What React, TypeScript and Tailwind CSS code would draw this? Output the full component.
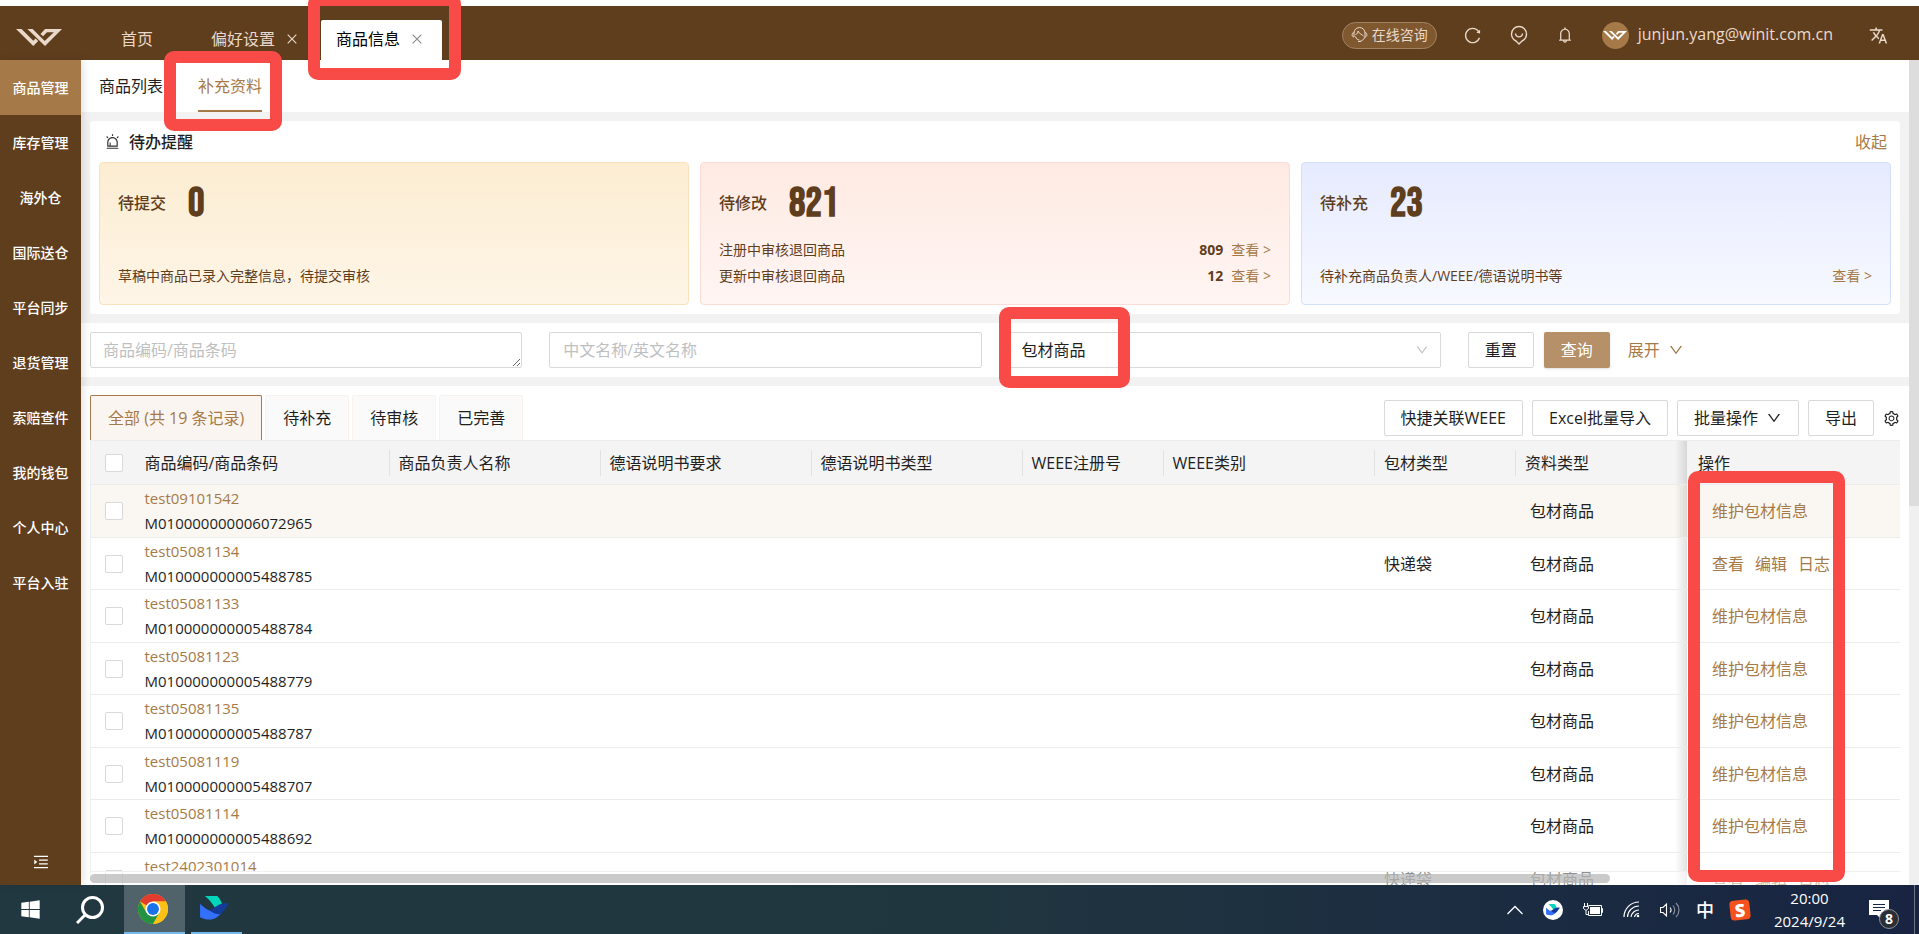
import { useState } from 'react'
import {
  AiOutlineAlert,
  AiOutlineBell,
  AiOutlineClose,
  AiOutlineDown,
  AiOutlineMenuUnfold,
  AiOutlineReload,
  AiOutlineSetting,
} from 'react-icons/ai'
import { FaWindows } from 'react-icons/fa'
import { MdTranslate } from 'react-icons/md'

const menuItems = [
  '商品管理',
  '库存管理',
  '海外仓',
  '国际送仓',
  '平台同步',
  '退货管理',
  '索赔查件',
  '我的钱包',
  '个人中心',
  '平台入驻',
]

interface Product {
  sku: string
  barcode: string
  packType: string
  dataType: string
  actions: string[]
}

const products: Product[] = [
  { sku: 'test09101542', barcode: 'M010000000006072965', packType: '', dataType: '包材商品', actions: ['维护包材信息'] },
  { sku: 'test05081134', barcode: 'M010000000005488785', packType: '快递袋', dataType: '包材商品', actions: ['查看', '编辑', '日志'] },
  { sku: 'test05081133', barcode: 'M010000000005488784', packType: '', dataType: '包材商品', actions: ['维护包材信息'] },
  { sku: 'test05081123', barcode: 'M010000000005488779', packType: '', dataType: '包材商品', actions: ['维护包材信息'] },
  { sku: 'test05081135', barcode: 'M010000000005488787', packType: '', dataType: '包材商品', actions: ['维护包材信息'] },
  { sku: 'test05081119', barcode: 'M010000000005488707', packType: '', dataType: '包材商品', actions: ['维护包材信息'] },
  { sku: 'test05081114', barcode: 'M010000000005488692', packType: '', dataType: '包材商品', actions: ['维护包材信息'] },
  { sku: 'test2402301014', barcode: '', packType: '快递袋', dataType: '包材商品', actions: ['查看', '编辑', '日志'] },
]

const columns = ['商品负责人名称', '德语说明书要求', '德语说明书类型', 'WEEE注册号', 'WEEE类别', '包材类型', '资料类型']

const LogoMark = ({ className }: { className: string }) => (
  <svg viewBox="48 57 141 52" className={className} fill="currentColor" aria-hidden="true">
    <path d="M48 57H65L101 93L108 86L116 94L101 109Z" />
    <path d="M83 57H99L136 94L164 67H143L131 79L123 72L137 57H189L137 109Z" />
  </svg>
)

const WaveIcon = ({ className }: { className: string }) => (
  <svg viewBox="0 0 30 26" className={className} aria-hidden="true">
    <path d="M5 0H18C21 3 22 6 23 9L16 13C13 8 9 3 5 0Z" fill="#00d6b9" />
    <path d="M0 8C6 14 14 19 23 16C18 24 10 27 0 22Z" fill="#3370ff" />
    <path d="M12 14C17 11 21 6 30 8C26 12 25 17 20 19C16 19 12 17 9 14Z" fill="#133c9a" />
  </svg>
)

const ChromeIcon = () => (
  <svg viewBox="0 0 48 48" className="size-[30px]" aria-hidden="true">
    <circle cx="24" cy="24" r="24" fill="#fbc116" />
    <path d="M24 24L3.2 12A24 24 0 0 1 44.8 12H24Z" fill="#e33b2e" />
    <path d="M3.2 12L13.6 30L24 24L34.4 30L24 48A24 24 0 0 1 3.2 12Z" fill="#229342" />
    <path d="M24 12H44.8A24 24 0 0 1 24 48L34.4 30Z" fill="#fbc116" />
    <circle cx="24" cy="24" r="12" fill="#fff" />
    <circle cx="24" cy="24" r="9.5" fill="#1a73e8" />
  </svg>
)

const Header = () => (
  <header className="flex h-[54px] shrink-0 bg-[#5f3e1d] text-[#ead9ca]">
    <div className="flex w-[81px] items-center pt-2 pl-4">
      <LogoMark className="h-[17px] w-[46px]" />
    </div>
    <nav className="flex items-end pl-10">
      <a href="#home" className="flex h-10 items-center pb-[2px]">首页</a>
      <div className="flex h-10 items-center gap-[10px] pr-[22px] pb-[2px] pl-[58px]">
        <a href="#preference">偏好设置</a>
        <button aria-label="关闭偏好设置"><AiOutlineClose className="size-[14px]" /></button>
      </div>
      <div className="flex h-10 items-center gap-[10px] rounded-t-[2px] bg-white pr-[18px] pb-[2px] pl-[15px] text-black">
        <a href="#product">商品信息</a>
        <button aria-label="关闭商品信息" className="text-[#8c8c8c]"><AiOutlineClose className="size-[14px]" /></button>
      </div>
    </nav>
    <div className="ml-auto flex items-center pt-1 pr-[31px]">
      <button className="flex h-[27px] items-center gap-1 rounded-full border border-[#a08362] bg-[#80582f] px-2 pb-px text-sm">
        <svg viewBox="0 0 17 17" className="size-[17px]" fill="none" stroke="currentColor" aria-hidden="true">
          <path d="M3 11V7A5.500 5.500 0 0 1 14 7V10C14 12.500 11.500 15 8.500 15.500" />
          <path d="M3 6.500C0.500 6.500 0.500 11 3 11M14 6.500C16.500 6.500 16.500 11 14 11" />
          <path d="M4.500 8.500C6.500 8 7 6.500 7 5C8.500 8 11 8.500 12.500 10M4.500 10.500C5 13 7 14 8.500 14" />
          <path d="M7 15.500H10" />
        </svg>
        在线咨询
      </button>
      <button aria-label="刷新" className="ml-[26px]"><AiOutlineReload className="size-[19px]" /></button>
      <button aria-label="位置" className="ml-7">
        <svg viewBox="0 0 18 20" className="h-5 w-[18px]" fill="none" stroke="currentColor" strokeWidth="1.400" aria-hidden="true">
          <path d="M9 19L6 16C3 14.500 1.500 12 1.500 9A7.500 7.500 0 0 1 16.500 9C16.500 12 15 14.500 12 16Z" />
          <path d="M5.500 8.500C6 13 12 13 12.500 8.500" />
        </svg>
      </button>
      <button aria-label="消息" className="ml-7"><AiOutlineBell className="size-[18px]" /></button>
      <span className="ml-7 flex size-[27px] items-center justify-center rounded-full bg-[#a67a48] text-white">
        <LogoMark className="h-[9px] w-6" />
      </span>
      <a href="#account" className="ml-[9px] pb-[2px]">junjun.yang@winit.com.cn</a>
      <button aria-label="切换语言" className="ml-9"><MdTranslate className="size-[19px]" /></button>
    </div>
  </header>
)

const Sidebar = () => (
  <aside className="z-10 flex w-[81px] shrink-0 flex-col bg-[#5f3e1d] text-sm font-medium text-white shadow-[2px_0_8px_rgba(0,0,0,0.12)]">
    {menuItems.map((item, i) => (
      <a
        key={item}
        href="#menu"
        className={`flex h-[55px] shrink-0 items-center justify-center ${i === 0 ? 'bg-[#a67a48]' : ''}`}
      >
        {item}
      </a>
    ))}
    <button aria-label="展开菜单" className="mx-auto mt-auto mb-[14px]">
      <AiOutlineMenuUnfold className="size-[18px]" />
    </button>
  </aside>
)

const ViewLink = () => (
  <a href="#view" className="text-[#a67a48]">查看 &gt;</a>
)

interface TodoCardProps {
  title: string
  count: number
  tone: string
  children: React.ReactNode
}

const TodoCard = ({ title, count, tone, children }: TodoCardProps) => (
  <div className={`flex h-[143px] flex-col justify-between rounded border bg-linear-to-b px-[18px] pt-[18px] pb-[15px] text-[#5f3e1d] ${tone}`}>
    <div className="flex h-10 items-center gap-[22px]">
      <h3 className="pt-1 font-medium">{title}</h3>
      <strong className="pt-[5px] font-['Bebas_Neue','Roboto_Condensed',sans-serif] text-[41px] leading-10">{count}</strong>
    </div>
    <div className="text-sm leading-[26px]">{children}</div>
  </div>
)

const TodoPanel = () => (
  <section className="mx-[9px] rounded bg-white px-[9px] pt-[6px] pb-[9px]">
    <div className="flex h-[35px] items-center pr-[4px] pb-[6px] pl-[5px]">
      <AiOutlineAlert className="size-[17px] text-[#333]" />
      <h2 className="ml-2 font-medium">待办提醒</h2>
      <button className="ml-auto text-[#a67a48]">收起</button>
    </div>
    <div className="grid grid-cols-3 gap-[11px]">
      <TodoCard title="待提交" count={0} tone="from-[#fcedd2] to-[#fef5e7] border-[#f9e2bb]">
        <p>草稿中商品已录入完整信息，待提交审核</p>
      </TodoCard>
      <TodoCard title="待修改" count={821} tone="from-[#feeae2] to-[#fff5f3] border-[#fbdcd6]">
        <p className="flex justify-between">
          注册中审核退回商品
          <span><b className="mr-2">809</b><ViewLink /></span>
        </p>
        <p className="flex justify-between">
          更新中审核退回商品
          <span><b className="mr-2">12</b><ViewLink /></span>
        </p>
      </TodoCard>
      <TodoCard title="待补充" count={23} tone="from-[#e6eafe] to-[#f7f9ff] border-[#d3dffc]">
        <p className="flex justify-between">
          待补充商品负责人/WEEE/德语说明书等
          <ViewLink />
        </p>
      </TodoCard>
    </div>
  </section>
)

const FilterBar = () => (
  <form className="grid h-[54px] shrink-0 grid-cols-4 items-center gap-[27px] bg-white px-[9px]">
    <textarea
      aria-label="商品编码/商品条码"
      placeholder="商品编码/商品条码"
      rows={1}
      className="h-9 rounded-[2px] border border-[#d9d9d9] px-3 py-[5px] leading-6 placeholder:text-[#bfbfbf]"
    />
    <input
      aria-label="中文名称/英文名称"
      placeholder="中文名称/英文名称"
      className="h-9 rounded-[2px] border border-[#d9d9d9] px-[13px] placeholder:text-[#bfbfbf]"
    />
    <div className="relative">
      <select aria-label="资料类型" className="block h-9 w-full appearance-none rounded-[2px] border border-[#d9d9d9] bg-white px-3">
        <option>包材商品</option>
      </select>
      <AiOutlineDown className="pointer-events-none absolute top-[11px] right-3 size-[14px] text-[#bfbfbf]" />
    </div>
    <div className="flex items-center">
      <button type="reset" className="h-9 rounded-[2px] border border-[#d9d9d9] px-4">重置</button>
      <button type="button" className="ml-[10px] h-9 rounded-[2px] bg-[#b59069] px-[17px] text-white shadow-sm">查询</button>
      <button type="button" className="ml-[18px] flex items-center gap-2 text-[#a67a48]">
        展开
        <AiOutlineDown className="size-4" />
      </button>
    </div>
  </form>
)

const Toolbar = () => {
  const tabs = ['全部 (共 19 条记录)', '待补充', '待审核', '已完善']
  const [active, setActive] = useState(0)
  const button = 'h-9 rounded-[2px] border border-[#d9d9d9] px-4'

  return (
    <div className="flex items-start">
      <div className="flex gap-[3px]">
        {tabs.map((tab, i) => (
          <button
            key={tab}
            onClick={() => setActive(i)}
            className={`h-[45px] rounded-t-[2px] border border-b-0 px-[17px] ${
              i === active ? 'border-[#a67a48] bg-[#faf5f1] text-[#a67a48]' : 'border-[#f7f2ee] bg-[#fafafa]'
            }`}
          >
            {tab}
          </button>
        ))}
      </div>
      <div className="ml-auto flex items-center gap-[9px] pt-[5px]">
        <button className={button}>快捷关联WEEE</button>
        <button className={button}>Excel批量导入</button>
        <button className={`flex items-center gap-2 ${button}`}>
          批量操作
          <AiOutlineDown className="size-4" />
        </button>
        <button className={button}>导出</button>
        <button aria-label="列设置"><AiOutlineSetting className="size-[17px]" /></button>
      </div>
    </div>
  )
}

const CheckBox = ({ label }: { label: string }) => (
  <input
    type="checkbox"
    aria-label={label}
    className="block size-[18px] appearance-none rounded-[2px] border border-[#d9d9d9] bg-white checked:bg-[#a67a48]"
  />
)

const pinned = 'relative before:absolute before:inset-y-0 before:-left-3 before:w-3 before:bg-linear-to-l before:from-black/12 before:to-transparent'

const ProductTable = () => (
  <table className="w-full table-fixed border-l border-[#f0f0f0] text-left">
    <colgroup>
      <col className="w-[46px]" />
      <col className="w-[252px]" />
      <col className="w-[211px]" />
      <col className="w-[211px]" />
      <col className="w-[211px]" />
      <col className="w-[141px]" />
      <col />
      <col className="w-[141px]" />
      <col className="w-[172px]" />
      <col className="w-[213px]" />
    </colgroup>
    <thead>
      <tr className="h-11 border-y border-[#ececec] bg-[#f4f4f4]">
        <th className="pl-[14px]"><CheckBox label="全选" /></th>
        <th className="pl-2 font-normal">商品编码/商品条码</th>
        {columns.map((name) => (
          <th key={name} className="font-normal">
            <div className="border-l border-[#e2e2e2] pl-[9px] leading-[26px]">{name}</div>
          </th>
        ))}
        <th className={`pl-[11px] font-normal ${pinned}`}>操作</th>
      </tr>
    </thead>
    <tbody>
      {products.map((p, i) => (
        <tr key={p.sku} className={`h-[53px] border-b border-[#ececec] even:h-[52px] ${i === 0 ? 'bg-[#faf7f2]' : 'bg-white'}`}>
          <td className="pl-[14px]"><CheckBox label={p.sku} /></td>
          <td className="pl-2 text-[15px] leading-[25px]">
            <a href="#sku" className="block text-[#a67a48]">{p.sku}</a>
            <div className="h-[25px]">{p.barcode}</div>
          </td>
          <td />
          <td />
          <td />
          <td />
          <td />
          <td className="pl-[10px]">{p.packType}</td>
          <td className="pl-[15px]">{p.dataType}</td>
          <td className={`pl-[25px] text-[#a67a48] ${pinned}`}>
            <div className="flex gap-[11px]">
              {p.actions.map((action) => (
                <a key={action} href="#action">{action}</a>
              ))}
            </div>
          </td>
        </tr>
      ))}
    </tbody>
  </table>
)

const Taskbar = () => (
  <footer className="flex h-[49px] shrink-0 items-stretch bg-linear-to-r from-[#223840] via-[#20363f] to-[#182442] text-white">
    <button aria-label="开始" className="flex w-[60px] items-center justify-center"><FaWindows className="size-[21px]" /></button>
    <button aria-label="搜索" className="flex w-16 items-center justify-center pr-1">
      <svg viewBox="0 0 28 28" className="size-7" fill="none" stroke="currentColor" strokeWidth="3" aria-hidden="true">
        <circle cx="16.500" cy="11.500" r="10" />
        <path d="M9.500 18.500L1 27" />
      </svg>
    </button>
    <button aria-label="Chrome" className="flex w-[61px] items-center justify-center border-b-2 border-[#76b9ed] bg-[#50626a] pr-1"><ChromeIcon /></button>
    <button aria-label="飞书" className="ml-[6px] flex w-[51px] items-center justify-center border-b-2 border-[#76b9ed] pr-1">
      <WaveIcon className="h-[25px] w-[29px]" />
    </button>
    <div className="ml-auto flex items-center gap-5">
      <svg viewBox="0 0 16 10" className="h-[10px] w-4" fill="none" stroke="currentColor" strokeWidth="1.300" aria-hidden="true">
        <path d="M0.500 9L8 1.500L15.500 9" />
      </svg>
      <span className="flex size-5 items-center justify-center rounded-full bg-white">
        <WaveIcon className="h-3 w-[14px]" />
      </span>
      <svg viewBox="0 0 20 14" className="h-[14px] w-5" fill="none" stroke="currentColor" aria-hidden="true">
        <path d="M5.500 2.500H18.500V12.500H5.500V8M18.500 5.500H19.500V9.500H18.500M1.500 0V3M4.500 0V3M0.500 3.500H5.500V5.500L3 7.500L0.500 5.500ZM3 7.500V11.500H5.500" />
        <path d="M7 4H17V11H7Z" fill="currentColor" stroke="none" />
      </svg>
      <svg viewBox="0 0 17 17" className="size-[17px]" fill="none" stroke="currentColor" strokeWidth="1.200" aria-hidden="true">
        <path d="M1 16A15 15 0 0 1 16 1" />
        <path d="M4.500 16A11.500 11.500 0 0 1 16 5" />
        <path d="M8 16A8 8 0 0 1 16 9" />
        <path d="M11.500 16A4.500 4.500 0 0 1 16 12.500" />
        <circle cx="15" cy="15" r="1.300" fill="currentColor" stroke="none" />
      </svg>
      <svg viewBox="0 0 20 16" className="h-4 w-5" fill="none" stroke="currentColor" strokeWidth="1.100" aria-hidden="true">
        <path d="M0.500 5.500H3L6.500 2V14L3 10.500H0.500ZM10 5.500C11.300 7 11.300 9 10 10.500" />
        <path d="M13 3.500C15.300 6 15.300 10 13 12.500M16 1C20 5 20 11 16 15" opacity="0.500" />
      </svg>
      <span className="-ml-1 text-lg leading-5 font-medium">中</span>
      <span className="-ml-1 flex size-5 -rotate-6 items-center justify-center rounded bg-[#f4511e] text-lg leading-5 font-extrabold">S</span>
      <div className="ml-1 text-center text-[15px] leading-[23px]">
        <p>20:00</p>
        <p>2024/9/24</p>
      </div>
      <div className="relative mr-[25px] ml-1">
        <svg viewBox="0 0 20 19" className="h-[19px] w-5" aria-hidden="true">
          <path d="M0 0H20V15H12V19L8 15H0Z" fill="#fff" />
          <path d="M4 4.500H16M4 7.500H16M4 10.500H12" stroke="#1a2744" />
        </svg>
        <span className="absolute top-[9px] left-[10px] flex size-5 items-center justify-center rounded-full border border-[#8b8f96] bg-[#2b2e35] text-sm leading-5 font-bold">8</span>
      </div>
    </div>
    <div className="w-[5px] border-l border-[#6c7484]" />
  </footer>
)

// Hand-drawn marks that guide the reader through the steps
const Highlights = () => (
  <div className="pointer-events-none">
    <div className="absolute top-[-6px] left-[308px] z-20 h-[86px] w-[153px] rounded-[10px] border-12 border-[#f84b47]" />
    <div className="absolute top-[51px] left-[164px] z-20 h-[80px] w-[118px] rounded-[10px] border-12 border-[#f84b47]" />
    <div className="absolute top-[307px] left-[999px] z-20 h-[81px] w-[131px] rounded-[10px] border-12 border-[#f84b47]" />
    <div className="absolute top-[471px] left-[1688px] z-20 h-[411px] w-[157px] rounded-[10px] border-12 border-[#f84b47]" />
  </div>
)

export default function App() {
  return (
    <div className="relative flex h-screen flex-col overflow-hidden bg-white pt-[6px] font-['Open_Sans','Noto_Sans_CJK_SC',sans-serif] text-base text-[#1f1f1f]">
      <Header />
      <div className="flex min-h-0 flex-1">
        <Sidebar />
        <main className="flex min-w-0 flex-1 flex-col bg-[#f2f2f2]">
          <nav className="flex h-[52px] shrink-0 gap-[35px] bg-white pl-[18px]">
            <a href="#list" className="flex items-center">商品列表</a>
            <a href="#supplement" className="flex items-center border-b-2 border-[#a67a48] pt-[2px] text-[#a67a48]">补充资料</a>
          </nav>
          <div className="flex min-h-0 flex-1 flex-col gap-[9px] pt-[9px]">
            <TodoPanel />
            <FilterBar />
            <section className="relative min-h-0 flex-1 overflow-hidden bg-white px-[9px] pt-[9px]">
              <Toolbar />
              <ProductTable />
              <div className="absolute inset-x-[9px] bottom-0 h-[14px] border-t border-[#f0f0f0] bg-white/50">
                <div className="mt-[2px] h-[9px] w-[84%] rounded-full bg-[#b4b4b4]/70" />
              </div>
            </section>
          </div>
        </main>
        <div className="w-[10px] shrink-0 bg-[#f0f0f0]">
          <div className="h-[54%] bg-[#dddddd]" />
        </div>
      </div>
      <Taskbar />
      <Highlights />
    </div>
  )
}
